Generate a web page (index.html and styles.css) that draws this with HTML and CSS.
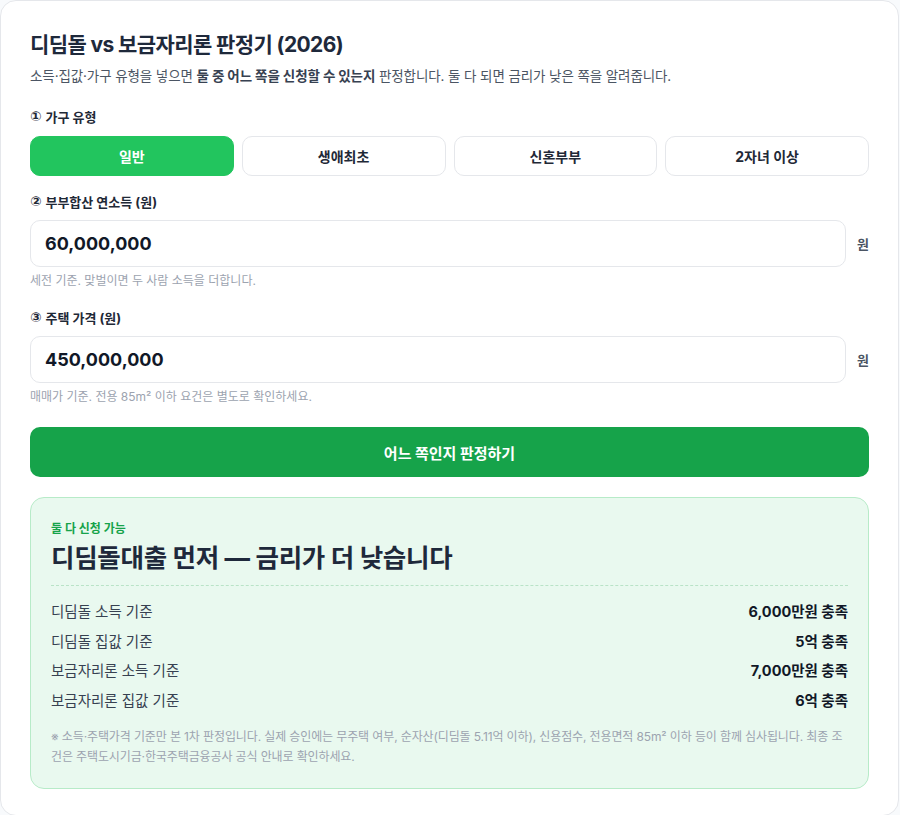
FILE: index.html
```html
<!DOCTYPE html>
<html lang="ko">
<head>
<meta charset="utf-8">
<title>디딤돌 vs 보금자리론 판정기</title>
<link rel="stylesheet" href="styles.css">
</head>
<body>
<main class="card">
  <h1 class="title">디딤돌 vs 보금자리론 판정기 (2026)</h1>
  <p class="subtitle">소득·집값·가구 유형을 넣으면 <strong>둘 중 어느 쪽을 신청할 수 있는지</strong> 판정합니다. 둘 다 되면 금리가 낮은 쪽을 알려줍니다.</p>

  <div class="label label-first"><span class="num">①</span><span>가구 유형</span></div>
  <div class="types">
    <button class="type active">일반</button>
    <button class="type">생애최초</button>
    <button class="type">신혼부부</button>
    <button class="type">2자녀 이상</button>
  </div>

  <div class="label"><span class="num">②</span><span>부부합산 연소득 (원)</span></div>
  <div class="input-row">
    <div class="input">60,000,000</div>
    <span class="unit">원</span>
  </div>
  <div class="hint">세전 기준. 맞벌이면 두 사람 소득을 더합니다.</div>

  <div class="label"><span class="num">③</span><span>주택 가격 (원)</span></div>
  <div class="input-row">
    <div class="input">450,000,000</div>
    <span class="unit">원</span>
  </div>
  <div class="hint">매매가 기준. 전용 85m² 이하 요건은 별도로 확인하세요.</div>

  <button class="submit">어느 쪽인지 판정하기</button>

  <section class="result">
    <div class="result-tag">둘 다 신청 가능</div>
    <h2 class="result-title">디딤돌대출 먼저 — 금리가 더 낮습니다</h2>
    <div class="rows">
      <div class="row"><span>디딤돌 소득 기준</span><b>6,000만원 충족</b></div>
      <div class="row"><span>디딤돌 집값 기준</span><b>5억 충족</b></div>
      <div class="row"><span>보금자리론 소득 기준</span><b>7,000만원 충족</b></div>
      <div class="row"><span>보금자리론 집값 기준</span><b>6억 충족</b></div>
    </div>
    <p class="note">※ 소득·주택가격 기준만 본 1차 판정입니다. 실제 승인에는 무주택 여부, 순자산(디딤돌 5.11억 이하), 신용점수, 전용면적 85m² 이하 등이 함께 심사됩니다. 최종 조건은 주택도시기금·한국주택금융공사 공식 안내로 확인하세요.</p>
  </section>
</main>
</body>
</html>
```

FILE: styles.css
```css
* { box-sizing: border-box; }
html, body { margin: 0; padding: 0; }
body {
  background: #f8fafc;
  font-family: Inter, "Noto Sans CJK KR", sans-serif;
  color: #1f2937;
}
.card {
  background: #ffffff;
  border: 1px solid #e5e7eb;
  border-radius: 16px;
  width: 899px;
  padding: 29px 29px 26px;
}
.title {
  margin: 0;
  font-size: 21px;
  line-height: 30px;
  font-weight: 700;
  color: #1e293b;
  letter-spacing: -0.6px;
}
.subtitle {
  margin: 6px 0 0;
  font-size: 13.5px;
  line-height: 20px;
  color: #4b5563;
  letter-spacing: -0.1px;
}
.subtitle strong { color: #374151; font-weight: 700; }
.label {
  display: flex;
  align-items: center;
  gap: 4px;
  height: 18px;
  margin-top: 17px;
  font-size: 13px;
  line-height: 18px;
  font-weight: 700;
  color: #1f2937;
}
.num {
  font-family: "DejaVu Sans", sans-serif;
  font-size: 13.5px;
  line-height: 1;
  font-weight: 700;
}
.label-first { margin-top: 22px; }
.types {
  display: grid;
  grid-template-columns: repeat(4, 1fr);
  gap: 8px;
  margin-top: 10px;
}
.type {
  height: 40px;
  border: 1px solid #e5e7eb;
  background: #ffffff;
  border-radius: 10px;
  font-family: inherit;
  font-size: 14px;
  font-weight: 700;
  color: #1f2937;
}
.type.active {
  background: #22c55e;
  border-color: #22c55e;
  color: #ffffff;
}
.input-row {
  display: flex;
  align-items: center;
  gap: 11px;
  margin-top: 9px;
}
.input {
  flex: 1;
  height: 47px;
  border: 1px solid #e5e7eb;
  border-radius: 10px;
  padding: 0 14px;
  display: flex;
  align-items: center;
  font-size: 18px;
  font-weight: 700;
  color: #111827;
}
.unit {
  font-size: 13px;
  font-weight: 700;
  color: #4b5563;
}
.hint {
  margin-top: 6px;
  font-size: 12px;
  line-height: 16px;
  color: #9ca3af;
}
.hint + .label { margin-top: 20px; }
.submit {
  display: block;
  width: 100%;
  height: 50px;
  margin-top: 22px;
  border: none;
  border-radius: 10px;
  background: #16a34a;
  color: #ffffff;
  font-family: inherit;
  font-size: 15px;
  font-weight: 700;
}
.result {
  margin-top: 20px;
  background: #e9f9ef;
  border: 1px solid #b7ebc8;
  border-radius: 14px;
  padding: 23px 20px 21px;
}
.result-tag {
  font-size: 12px;
  line-height: 16px;
  font-weight: 700;
  color: #16a34a;
}
.result-title {
  margin: 5px 0 0;
  font-size: 25.5px;
  line-height: 32px;
  font-weight: 700;
  color: #1e293b;
  letter-spacing: -0.3px;
  padding-bottom: 11px;
  border-bottom: 1px dashed #b9e3c7;
}
.rows { margin-top: 11px; }
.row {
  display: flex;
  justify-content: space-between;
  font-size: 14.5px;
  line-height: 29.5px;
  color: #374151;
}
.row b { color: #111827; font-weight: 700; }
.note {
  margin: 12px 0 0;
  font-size: 12px;
  line-height: 20px;
  color: #9ca3af;
  letter-spacing: -0.12px;
}
```
